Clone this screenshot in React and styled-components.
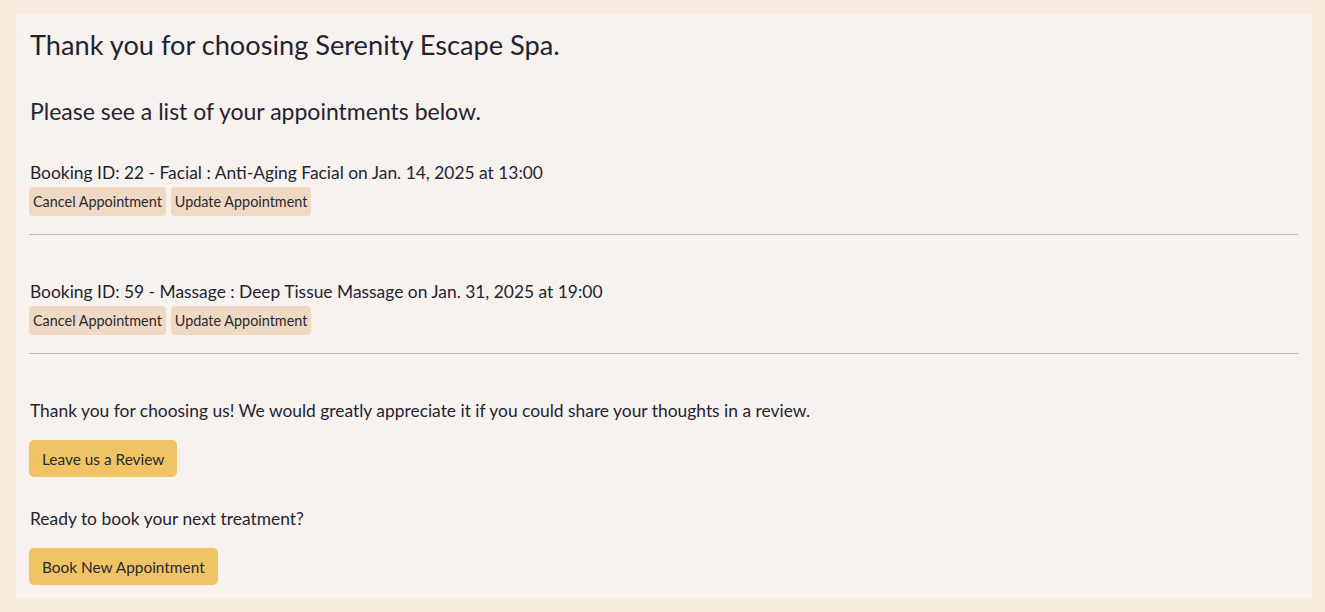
import React from 'react';
import styled, { createGlobalStyle } from 'styled-components';

const GlobalStyle = createGlobalStyle`
  body {
    margin: 0;
    background-color: #f7eadf;
    font-family: Lato, "Open Sans", sans-serif;
    color: #1f2433;
  }
`;

const Page = styled.div`
  padding: 14px 13px 13px 16px;
`;

const Panel = styled.main`
  background-color: #f8f2ee;
  padding: 14px 14px 14px 13px;
`;

const Title = styled.h1`
  font-size: 27.2px;
  font-weight: 400;
  line-height: 32px;
  margin: 1px 0 0 1px;
`;

const Subtitle = styled.h2`
  font-size: 23px;
  font-weight: 400;
  line-height: 26px;
  margin: 37px 0 0 1px;
`;

const Booking = styled.section`
  margin-top: ${(p) => (p.first ? '39px' : '47px')};
`;

const BookingText = styled.p`
  font-size: 17.4px;
  line-height: 20px;
  margin: 0 0 4px 1px;
`;

const Actions = styled.div`
  display: flex;
  gap: 5px;
`;

const SmallButton = styled.button`
  font-family: inherit;
  font-size: 14.4px;
  color: #2a2a33;
  background-color: #f0d9c3;
  border: none;
  border-radius: 4px;
  height: 29px;
  padding: 0 4px;
  cursor: pointer;
`;

const Divider = styled.hr`
  border: none;
  border-top: 1px solid #bcb7b4;
  margin: 18px 0 0;
`;

const Text = styled.p`
  font-size: 17.4px;
  line-height: 20px;
  margin: ${(p) => p.top} 0 0 1px;
`;

const MainButton = styled.button`
  display: block;
  font-family: inherit;
  font-size: 15.4px;
  color: #2a2a33;
  background-color: #f0c465;
  border: none;
  border-radius: 5px;
  height: 37px;
  padding: 0 13px;
  margin-top: 19px;
  cursor: pointer;
`;

const bookings = [
  { id: 22, text: 'Facial : Anti-Aging Facial on Jan. 14, 2025 at 13:00' },
  { id: 59, text: 'Massage : Deep Tissue Massage on Jan. 31, 2025 at 19:00' },
];

export default function App() {
  return (
    <>
      <GlobalStyle />
      <Page>
        <Panel>
          <Title>Thank you for choosing Serenity Escape Spa.</Title>
          <Subtitle>Please see a list of your appointments below.</Subtitle>
          {bookings.map((b, i) => (
            <Booking key={b.id} first={i === 0}>
              <BookingText>
                Booking ID: {b.id} - {b.text}
              </BookingText>
              <Actions>
                <SmallButton>Cancel Appointment</SmallButton>
                <SmallButton>Update Appointment</SmallButton>
              </Actions>
              <Divider />
            </Booking>
          ))}
          <Text top="47px">
            Thank you for choosing us! We would greatly appreciate it if you could share your thoughts in a review.
          </Text>
          <MainButton>Leave us a Review</MainButton>
          <Text top="32px">Ready to book your next treatment?</Text>
          <MainButton>Book New Appointment</MainButton>
        </Panel>
      </Page>
    </>
  );
}
